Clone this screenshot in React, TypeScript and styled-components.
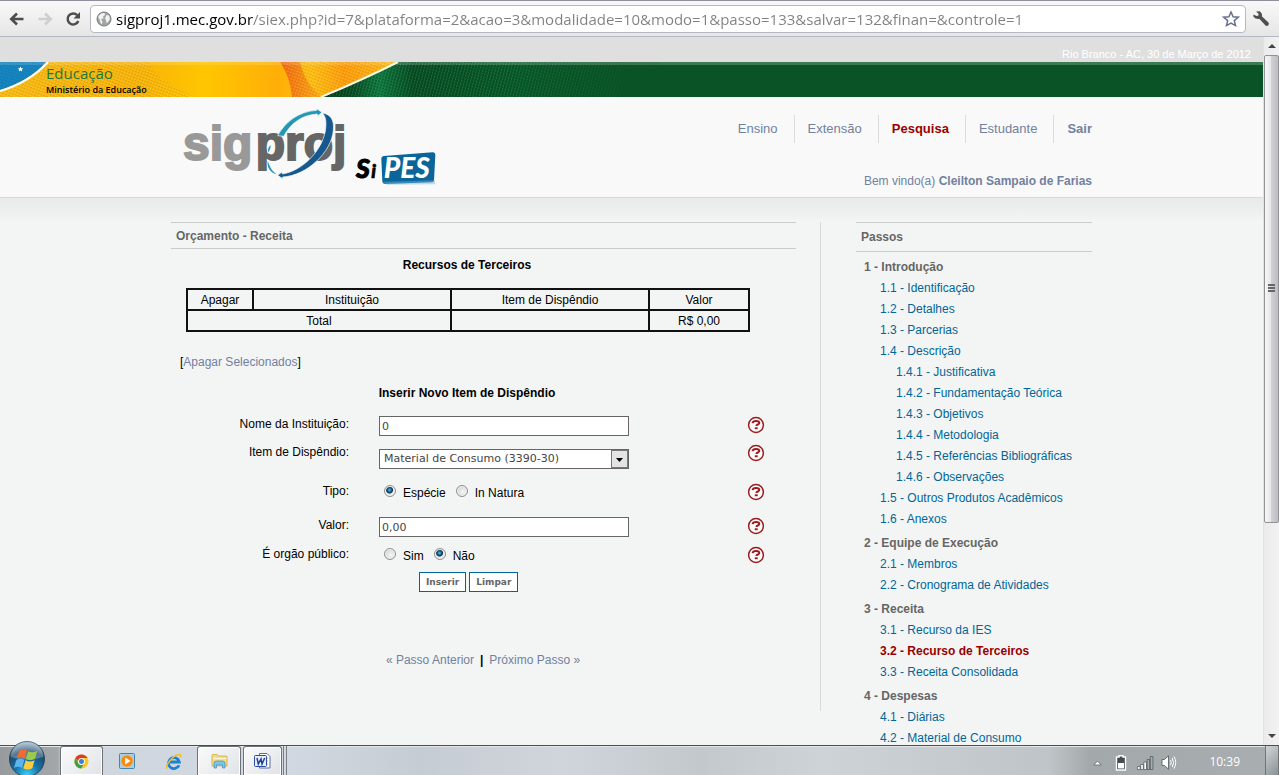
import React from "react";
import styled, { createGlobalStyle, css } from "styled-components";

const sans = `"Liberation Sans", Arial, sans-serif`;
const verdana = `"DejaVu Sans", Verdana, sans-serif`;
const segoe = `"Open Sans", "Segoe UI", sans-serif`;

const GlobalStyle = createGlobalStyle`
  * { box-sizing: border-box; }
  body { margin: 0; font: 12px/16px ${sans}; color: #000; background: #f3f5f4; }
  a { text-decoration: none; }
  button { font: inherit; }
  h1, h2, p, ul { margin: 0; padding: 0; }
  ul { list-style: none; }
`;

const Window = styled.div`
  display: flex;
  flex-direction: column;
  height: 100vh;
`;

/* Browser toolbar */
const Toolbar = styled.header`
  display: flex;
  align-items: center;
  flex: none;
  height: 37px;
  padding: 0 7px;
  border-top: 1px solid #8e8e9c;
  border-bottom: 1px solid #b3b8c4;
  background: linear-gradient(#f8f8f9, #e6e6e7);
`;

const ToolButton = styled.button<{ $width: number }>`
  display: flex;
  align-items: center;
  justify-content: center;
  width: ${(p) => p.$width}px;
  height: 28px;
  padding: 0;
  border: 0;
  background: none;
`;

const AddressBar = styled.div`
  display: flex;
  align-items: center;
  flex: 1;
  height: 28px;
  margin: 0 4px 0 7px;
  padding: 0 5px;
  border: 1px solid #b8b9c0;
  border-radius: 4px;
  background: #fff;
`;

const AddressInput = styled.input`
  flex: 1;
  min-width: 0;
  height: 24px;
  margin-left: 4px;
  padding: 0;
  border: 0;
  outline: 0;
  font: 15px/24px ${segoe};
  background: linear-gradient(90deg, #000 137px, #808080 137px);
  background-clip: text;
  -webkit-background-clip: text;
  -webkit-text-fill-color: transparent;
`;

/* Viewport */
const Viewport = styled.div`
  display: flex;
  flex: 1;
  min-height: 0;
`;

const Page = styled.div`
  flex: 1;
  min-width: 0;
  overflow: hidden;
`;

const DateBar = styled.div`
  height: 25px;
  padding: 10px 12px 0 0;
  background: #dfdfdf;
  color: #fff;
  font-size: 11px;
  line-height: 15px;
  text-align: right;
`;

const Banner = styled.div`
  position: relative;
  height: 35px;
  padding: 1px 0 0 46px;
  background: linear-gradient(#3c7a51 3px, #0a5326 3px);
`;

const BannerArt = styled.svg`
  position: absolute;
  top: 0;
  left: 0;
`;

const BannerTitle = styled.div`
  position: relative;
  color: #1c7a3c;
  font: 15px/21px ${segoe};
`;

const BannerSubtitle = styled.div`
  position: relative;
  font: 9px/12px ${segoe};
  font-weight: 600;
`;

const Container = styled.div`
  display: flex;
  justify-content: space-between;
  width: 100%;
  max-width: 921px;
  margin: 0 auto;
`;

const SiteHeader = styled.div`
  height: 101px;
  border-bottom: 1px solid #dadcdb;
  background: #f9f9f9;
`;

const HeaderRight = styled.div`
  display: flex;
  flex-direction: column;
  align-items: flex-end;
  padding-top: 18px;
  color: #71819f;
`;

const Nav = styled.nav`
  display: flex;
  margin-bottom: 30px;
`;

const NavLink = styled.a<{ $active?: boolean; $bold?: boolean }>`
  padding: 0 16px 0 13px;
  border-right: 1px solid #dcdcdc;
  color: ${(p) => (p.$active ? "#990000" : "#71819f")};
  font-size: 13px;
  font-weight: ${(p) => (p.$active || p.$bold ? "bold" : "normal")};
  line-height: 28px;
  &:last-child {
    padding-right: 0;
    border-right: 0;
  }
`;

const Body = styled.div`
  padding-top: 24px;
  background: linear-gradient(#e8eae9, #f3f5f4 24px);
`;

const Main = styled.main`
  flex: 1;
  min-width: 0;
  max-width: 625px;
`;

const SectionTitle = styled.h1<{ $height: number }>`
  height: ${(p) => p.$height}px;
  padding: 0 5px;
  border: solid #c9cccb;
  border-width: 1px 0;
  color: #666;
  font-size: 12px;
  line-height: ${(p) => p.$height - 1}px;
`;

const Block = styled.div`
  width: 562px;
  max-width: 100%;
  margin-left: 15px;
`;

const Caption = styled.h2`
  font-size: 12px;
  line-height: 16px;
  text-align: center;
`;

const ResourceBlock = styled(Block)`
  padding-top: 8px;
`;

const Table = styled.table`
  width: 100%;
  margin: 15px 0 22px;
  border-collapse: collapse;
  table-layout: fixed;
  th, td {
    height: 21px;
    padding: 0;
    border: 2px solid #111;
    font-weight: normal;
    line-height: 16px;
    text-align: center;
  }
`;

const DeleteLine = styled.p`
  margin: 0 0 15px 9px;
`;

const SoftLink = styled.a`
  color: #71819f;
`;

const Form = styled.form`
  padding-top: 15px;
`;

const FormRow = styled.div<{ $height: number }>`
  display: grid;
  grid-template-columns: 178px 250px 1fr;
  column-gap: 30px;
  align-items: start;
  height: ${(p) => p.$height}px;
`;

const labelText = css`
  line-height: 16px;
  text-align: right;
`;
const FieldLabel = styled.label`${labelText}`;
const GroupLabel = styled.span`${labelText}`;

const TextInput = styled.input`
  width: 100%;
  height: 20px;
  padding: 1px 2px 0;
  border: 1px solid #666;
  background: #fff;
  color: #444;
  font: 11px/16px ${verdana};
`;

const SelectWrap = styled.div`
  position: relative;
  height: 20px;
  margin-top: 5px;
`;

const Select = styled.select`
  appearance: none;
  display: block;
  width: 100%;
  height: 20px;
  padding: 0 20px 0 4px;
  border: 1px solid #666;
  border-radius: 0;
  background: #fff;
  color: #444;
  font: 11px/16px ${verdana};
`;

const SelectArrow = styled.svg`
  position: absolute;
  top: 1px;
  right: 1px;
  pointer-events: none;
`;

const RadioRow = styled.div`
  display: flex;
  height: 18px;
  padding-left: 5px;
  gap: 10px;
`;

const RadioLabel = styled.label`
  display: flex;
  gap: 7px;
  line-height: 20px;
`;

const Radio = styled.input`
  appearance: none;
  width: 12px;
  height: 12px;
  margin: 2px 0 0;
  border: 1px solid #8e8f8f;
  border-radius: 50%;
  background: radial-gradient(circle at 60% 60%, #f6f6f6, #c4c8cc);
  box-shadow: inset 0 0 0 1px #f4f4f4;
  &:checked {
    background: radial-gradient(circle at 45% 40%, #5fc0e8 0, #1a5f88 2px, #0b2f47 3px, #e4e8ea 4px);
  }
`;

const HelpButton = styled.button`
  display: block;
  width: 18px;
  height: 18px;
  justify-self: end;
  margin-right: 31px;
  padding: 0;
  border: 0;
  background: none;
`;

const Actions = styled.div`
  display: flex;
  gap: 3px;
  padding-left: 248px;
`;

const ActionButton = styled.button`
  height: 20px;
  padding: 0 6px;
  border: 1px solid #006699;
  background: #fff;
  color: #666;
  font: bold 9px/18px ${verdana};
`;

const Pager = styled.p`
  display: flex;
  justify-content: center;
  gap: 6px;
  margin-top: 60px;
  padding-left: 32px;
`;

const Aside = styled.aside`
  display: flex;
  flex: none;
  gap: 35px;
`;

const Divider = styled.div`
  width: 1px;
  height: 489px;
  background: #d9dbda;
`;

const Steps = styled.div`
  width: 236px;
`;

const StepGroup = styled.ul`
  padding-left: 8px;
  margin-bottom: 3px;
`;

const StepItem = styled.li<{ $level: number }>`
  padding-left: ${(p) => p.$level * 16}px;
  color: #666;
  font-weight: ${(p) => (p.$level === 0 ? "bold" : "normal")};
  line-height: 21px;
  white-space: nowrap;
`;

const StepLink = styled.a<{ $active?: boolean }>`
  color: ${(p) => (p.$active ? "#990000" : "#006699")};
  font-weight: ${(p) => (p.$active ? "bold" : "normal")};
`;

const StepsList = styled.div`
  padding-top: 5px;
`;

/* Scroll bar */
const ScrollBar = styled.div`
  display: flex;
  flex: none;
  flex-direction: column;
  width: 16px;
  border-left: 1px solid #e2e2e2;
  background: linear-gradient(90deg, #ebebeb, #f2f2f2);
`;

const ScrollArrow = styled.button`
  display: flex;
  align-items: center;
  justify-content: center;
  flex: none;
  height: 18px;
  padding: 0;
  border: 0;
  background: none;
`;

const ScrollThumb = styled.div`
  display: flex;
  align-items: center;
  justify-content: center;
  flex: 469;
  border: 1px solid #929297;
  border-radius: 2px;
  background: linear-gradient(90deg, #f7f7f7, #e6e6e8 45%, #cfcfd4 50%, #bdbdc4);
`;

const ScrollRest = styled.div`
  flex: 206;
`;

/* Task bar */
const TaskBar = styled.footer`
  position: relative;
  display: flex;
  justify-content: space-between;
  flex: none;
  height: 30px;
  padding-left: 60px;
  border-top: 1px solid #4b4f52;
  background: linear-gradient(90deg, #979b9e 0, #a3a7aa 58px, #cfd5dd 62px, #d3d9e2 280px, #c6ccd3 420px, #d0d5db 560px, #c3c8cd 700px, #ced3d8 820px, #bfc4c8 1050px, #a3a8aa 1090px, #a8adaf 100%);
  box-shadow: inset 0 1px 0 #e4e7ea;
`;

const StartButton = styled.button`
  position: absolute;
  top: -6px;
  left: 8px;
  width: 38px;
  height: 35px;
  padding: 0;
  border: 0;
  background: none;
  overflow: hidden;
`;

const Tasks = styled.div`
  display: flex;
`;

const TaskGap = styled.div`
  width: 2px;
`;

const TaskButton = styled.button<{ $open?: boolean; $width: number }>`
  display: flex;
  align-items: center;
  justify-content: center;
  width: ${(p) => p.$width}px;
  height: 29px;
  padding: 0;
  border: 1px solid ${(p) => (p.$open ? "#6d7276" : "transparent")};
  border-bottom: 0;
  border-radius: 3px 3px 0 0;
  background: ${(p) => (p.$open ? "linear-gradient(135deg, #fafafa, #e0e3e7)" : "none")};
  box-shadow: ${(p) => (p.$open ? "inset 0 0 0 1px #fff" : "none")};
`;

const TaskEdge = styled.div`
  width: 4px;
  margin-left: 1px;
  border: solid #7a7f83;
  border-width: 0 1px;
`;

const Tray = styled.div`
  display: flex;
  align-items: center;
`;

const TrayButton = styled.button`
  display: flex;
  align-items: center;
  justify-content: center;
  width: 24px;
  height: 28px;
  padding: 4px 0 0;
  border: 0;
  background: none;
`;

const Clock = styled.time`
  margin: 3px 25px 0 28px;
  color: #fff;
  font: 12px/18px ${segoe};
`;

const ShowDesktop = styled.button`
  width: 14px;
  height: 29px;
  padding: 0;
  border: 1px solid #6f7679;
  border-width: 0 1px;
  background: linear-gradient(135deg, #d0d4d6, #8b9295);
`;

type Step = { level: number; text: string; active?: boolean };

const steps: Step[][] = [
  [
    { level: 0, text: "1 - Introdução" },
    { level: 1, text: "1.1 - Identificação" },
    { level: 1, text: "1.2 - Detalhes" },
    { level: 1, text: "1.3 - Parcerias" },
    { level: 1, text: "1.4 - Descrição" },
    { level: 2, text: "1.4.1 - Justificativa" },
    { level: 2, text: "1.4.2 - Fundamentação Teórica" },
    { level: 2, text: "1.4.3 - Objetivos" },
    { level: 2, text: "1.4.4 - Metodologia" },
    { level: 2, text: "1.4.5 - Referências Bibliográficas" },
    { level: 2, text: "1.4.6 - Observações" },
    { level: 1, text: "1.5 - Outros Produtos Acadêmicos" },
    { level: 1, text: "1.6 - Anexos" },
  ],
  [
    { level: 0, text: "2 - Equipe de Execução" },
    { level: 1, text: "2.1 - Membros" },
    { level: 1, text: "2.2 - Cronograma de Atividades" },
  ],
  [
    { level: 0, text: "3 - Receita" },
    { level: 1, text: "3.1 - Recurso da IES" },
    { level: 1, text: "3.2 - Recurso de Terceiros", active: true },
    { level: 1, text: "3.3 - Receita Consolidada" },
  ],
  [
    { level: 0, text: "4 - Despesas" },
    { level: 1, text: "4.1 - Diárias" },
    { level: 1, text: "4.2 - Material de Consumo" },
  ],
];

const Help = ({ about }: { about: string }) => (
  <HelpButton type="button" aria-label={`Ajuda: ${about}`}>
    <svg width="18" height="18" viewBox="0 0 18 18">
      <circle cx="9" cy="9" r="7.4" fill="#fbfbfb" stroke="#9b1c1f" strokeWidth="1.5" />
      <path d="M5.6 7.2C5.800 5.600 7 5.100 9 5.100c2.100 0 3.300.6 3.300 1.900 0 1.600-2.900 1.400-2.900 3" fill="none" stroke="#9b1c1f" strokeWidth="2" />
      <rect x="7.800" y="11.300" width="2.900" height="1.900" fill="#9b1c1f" />
    </svg>
  </HelpButton>
);

const Logo = () => (
  <svg width="270" height="95" viewBox="33 6 810 285" role="img" aria-label="sigproj SiPES">
    <g fontFamily="Liberation Sans, Arial, sans-serif" fontWeight="bold" fontSize="144" strokeWidth="6">
      <text x="69" y="194" fill="#999" stroke="#999">sig</text>
      <text x="287" y="194" fill="#666" stroke="#666">proj</text>
    </g>
    <path d="M353 122C375 82 415 49 470 46L470 41 486 52 472 64 472 57C425 60 392 85 371 124Z" fill="#2397b5" stroke="#f9f9f9" strokeWidth="2" />
    <path d="M324 172C323 162 326 155 332 150 332 160 329 168 324 172Z" fill="#2397b5" stroke="#f9f9f9" strokeWidth="4" paintOrder="stroke" />
    <path d="M324 200C330 215 335 228 350 237 336 236 320 222 323 198Z" fill="#2397b5" stroke="#f9f9f9" strokeWidth="4" paintOrder="stroke" />
    <path d="M487 54C514 58 523 78 520 105 515 172 440 242 368 246L368 251 353 241 366 231 367 237C425 228 485 170 496 108 500 82 498 65 487 54Z" fill="#15598f" stroke="#f9f9f9" strokeWidth="2" />
    <g fontFamily="Lato, sans-serif" fontWeight="900" fontStyle="italic">
      <text x="588" y="248" fontSize="80" fill="#000" stroke="#000" strokeWidth="3">S</text>
      <text x="634" y="248" fontSize="56" fill="#000" stroke="#000" strokeWidth="2">i</text>
      <path d="M672 183L818 172Q826 172 826 181L822 256Q822 262 815 262L676 267Q668 267 667 259L664 192Q664 184 672 183Z" fill="#0a659b" />
      <path d="M668 260L824 256 826 268 680 269Z" fill="#74b2d2" opacity=".45" />
      <text x="671" y="248" fontSize="84" fill="#fff">PES</text>
    </g>
  </svg>
);

const BannerPicture = () => (
  <BannerArt width="660" height="35" viewBox="0 0 660 35" aria-hidden="true">
    <defs>
      <linearGradient id="gold">
        <stop offset="0" stopColor="#f8ba14" />
        <stop offset=".35" stopColor="#f9b408" />
        <stop offset=".5" stopColor="#ffc600" />
        <stop offset=".68" stopColor="#ffae08" />
        <stop offset=".76" stopColor="#ffc012" />
        <stop offset=".84" stopColor="#ff9d0a" />
        <stop offset="1" stopColor="#fdc418" />
      </linearGradient>
      <linearGradient id="fold">
        <stop offset="0" stopColor="#f4670f" />
        <stop offset="1" stopColor="#fbb014" />
      </linearGradient>
      <linearGradient id="green">
        <stop offset="0" stopColor="#063a1b" />
        <stop offset=".09" stopColor="#0b4a24" />
        <stop offset=".17" stopColor="#137a42" />
        <stop offset=".27" stopColor="#0a4a24" />
        <stop offset=".6" stopColor="#0a5a2a" />
        <stop offset="1" stopColor="#0a5326" />
      </linearGradient>
      <linearGradient id="fade">
        <stop offset="0" stopColor="#0a5326" stopOpacity="0" />
        <stop offset="1" stopColor="#0a5326" />
      </linearGradient>
      <pattern id="weave" width="3" height="3" patternUnits="userSpaceOnUse" patternTransform="rotate(20)">
        <rect width="1" height="1" fill="#fff" opacity=".22" />
        <rect x="1" y="1" width="2" height="1" fill="#000" opacity=".1" />
      </pattern>
      <pattern id="darkWeave" width="3" height="3" patternUnits="userSpaceOnUse" patternTransform="rotate(15)">
        <rect width="1" height="2" fill="#26a35a" opacity=".45" />
        <rect x="1" y="1" width="2" height="1" fill="#002a10" opacity=".4" />
      </pattern>
    </defs>
    <path d="M0 0H410L322 35H0Z" fill="url(#gold)" />
    <path d="M280 0H300Q305 22 322 35H292Q290 14 280 0Z" fill="url(#fold)" />
    <path d="M0 31Q35 20 50 0H150Q150 15 195 35H0Z" fill="url(#weave)" />
    <path d="M280 0H398L322 35H292Q292 15 280 0Z" fill="url(#weave)" />
    <path d="M0 0H46Q28 20 0 28Z" fill="#1584c6" />
    <path d="M0 0H46Q28 20 0 28Z" fill="url(#darkWeave)" opacity=".35" />
    <path d="M0 29Q30 20 48 0" fill="none" stroke="#fff" strokeWidth="2" />
    <path d="M20.500 4.500l.8 1.700 1.900.2-1.400 1.300.4 1.900-1.700-1-1.700 1 .4-1.900-1.400-1.300 1.900-.2z" fill="#fff" />
    <path d="M398 0H660V35H322Z" fill="url(#green)" />
    <path d="M398 0H620V35H322Z" fill="url(#darkWeave)" />
    <rect x="500" width="160" height="35" fill="url(#fade)" />
    <path d="M321 35Q362 18 398 0" fill="none" stroke="#fffbe8" strokeWidth="2" />
    <rect x="398" width="262" height="3" fill="#fff" opacity=".2" />
    <rect width="398" height="3" fill="#fff" opacity=".15" />
  </BannerArt>
);

const WindowsOrb = () => (
  <svg width="38" height="38" viewBox="0 0 38 38">
    <defs>
      <radialGradient id="orb" cx=".5" cy=".95" r=".9">
        <stop offset="0" stopColor="#3bd0f5" />
        <stop offset=".4" stopColor="#1573ac" />
        <stop offset=".75" stopColor="#214a6e" />
        <stop offset="1" stopColor="#8fb0c4" />
      </radialGradient>
    </defs>
    <circle cx="19" cy="19" r="17.500" fill="url(#orb)" stroke="#31485a" />
    <path d="M3 17A16 16 0 0 1 35 17Q19 22 3 17Z" fill="#fff" opacity=".25" />
    <path d="M11 11q4-3 8-.5l-2.300 8q-4-2.500-8 0z" fill="#ef6a35" />
    <path d="M20.200 11.300q4 2.200 9-.3l-2.300 8q-5 2.300-9 0z" fill="#9bcb4a" />
    <path d="M8.300 20q4-2.500 8 0l-2.300 8q-4-2.500-8 0z" fill="#5db5ee" />
    <path d="M17.600 20.300q4 2.400 9 0l-2.300 8q-5 2.500-9 0z" fill="#fccc3f" />
  </svg>
);

const ChromeIcon = () => (
  <svg width="15" height="15" viewBox="0 0 16 16">
    <circle cx="8" cy="8" r="7.500" fill="#f6c72b" />
    <path d="M1.500 4.250A7.500 7.500 0 0 1 14.500 4.250H8Q5 4.500 4.600 8Z" fill="#dd3b2c" />
    <path d="M1.500 4.250A7.500 7.500 0 0 0 7.600 15.500L11 9.800 8 11.500 4.800 10Z" fill="#3ba04b" />
    <circle cx="8" cy="8" r="3.600" fill="#fff" />
    <circle cx="8" cy="8" r="2.700" fill="#3b7fd9" />
  </svg>
);

const PlayerIcon = () => (
  <svg width="16" height="16" viewBox="0 0 16 16">
    <rect x=".5" y=".5" width="15" height="15" rx="1" fill="#9fd0ee" stroke="#3f86b8" />
    <circle cx="8" cy="8" r="6" fill="#f58a12" stroke="#fbc279" strokeWidth=".6" />
    <path d="M6.200 4.600L11.500 8l-5.300 3.400z" fill="#fff" />
  </svg>
);

const ExplorerIcon = () => (
  <svg width="17" height="17" viewBox="0 0 17 17">
    <path d="M14 12.200A5.500 5.500 0 1 1 14.300 9H5" fill="none" stroke="#1b83d4" strokeWidth="2.800" />
    <path d="M2.200 15.500C-.5 12.500 9 1 15 1.500 16 2 15.600 3.500 15 4.500" fill="none" stroke="#f3bd2c" strokeWidth="1.500" />
  </svg>
);

const FolderIcon = () => (
  <svg width="17" height="16" viewBox="0 0 17 16">
    <path d="M1 2.500Q1 1.500 2 1.500h4l1 1.500h8q1 0 1 1V13H1z" fill="#f4dc84" stroke="#c9a84a" strokeWidth=".8" />
    <path d="M2 5.500h13.500" stroke="#fff7cf" strokeWidth="1.200" />
    <path d="M3 15V10.500Q3 8 5.500 8h6Q14 8 14 10.500V15h-2.500v-3h-6v3z" fill="#7fc4e8" stroke="#3b8fc0" strokeWidth=".7" />
  </svg>
);

const WordIcon = () => (
  <svg width="17" height="16" viewBox="0 0 17 16">
    <path d="M5.500.5H13L16 3.500V15H5.500z" fill="#fff" stroke="#5b6fa8" />
    <path d="M8 5h6M8 8h6M8 11h6" stroke="#9db0dc" />
    <rect x=".5" y="2.500" width="12" height="11" rx="1" fill="#e8effb" stroke="#2b4d9c" />
    <path d="M3 5l1.300 6L7 6l1 5 2.700-6" fill="none" stroke="#1f4397" strokeWidth="1.500" />
  </svg>
);

export default function App() {
  return (
    <Window>
      <GlobalStyle />
      <Toolbar>
        <ToolButton aria-label="Voltar" $width={20}>
          <svg width="16" height="14" viewBox="0 0 16 14" fill="none" stroke="#4d4d4d" strokeWidth="2.600">
            <path d="M2 7h12.500M8 1.500L2.300 7 8 12.500" />
          </svg>
        </ToolButton>
        <ToolButton aria-label="Avançar" $width={36}>
          <svg width="16" height="14" viewBox="0 0 16 14" fill="none" stroke="#cfcfd1" strokeWidth="2.600">
            <path d="M14 7H1.500M8 1.500L13.700 7 8 12.500" />
          </svg>
        </ToolButton>
        <ToolButton aria-label="Recarregar" $width={20}>
          <svg width="16" height="16" viewBox="0 0 16 16">
            <path d="M12.200 4.200A5.500 5.500 0 1 0 13.300 10" fill="none" stroke="#4d4d4d" strokeWidth="2.500" />
            <path d="M15 1v6.500H8.500z" fill="#4d4d4d" />
          </svg>
        </ToolButton>
        <AddressBar>
          <svg width="16" height="16" viewBox="0 0 16 16" aria-hidden="true">
            <circle cx="8" cy="8" r="7" fill="#a2a4a6" stroke="#77797b" />
            <path d="M2.500 5Q5 1.500 8.500 2L9 4 7 5.500 7.500 7.500 5 8 6.500 11 5.500 13.500Q3.500 11 4 9Q2 7.500 2.500 5ZM10.500 4L13 4.500 14 8 12 11 10.500 12 10 9 9 7.500Z" fill="#f2f2f2" />
          </svg>
          <AddressInput
            aria-label="Endereço"
            spellCheck={false}
            defaultValue="sigproj1.mec.gov.br/siex.php?id=7&plataforma=2&acao=3&modalidade=10&modo=1&passo=133&salvar=132&finan=&controle=1"
          />
          <svg width="18" height="18" viewBox="0 0 18 18" role="img" aria-label="Favorito">
            <path d="M9 2l2.100 4.700 5.100.5-3.900 3.400 1.200 5L9 13l-4.500 2.600 1.200-5-3.900-3.400 5.100-.5z" fill="#fff" stroke="#66718a" strokeWidth="1.500" />
          </svg>
        </AddressBar>
        <ToolButton aria-label="Ferramentas" $width={22}>
          <svg width="18" height="18" viewBox="0 0 18 18">
            <path d="M4 1.500L7.500 1.200Q10.500 3 10 6.500L16.500 12.500Q17.500 14 16.300 15.300 15 16.500 13.500 15.500L7.500 9Q3.500 9.500 1.300 6.500L1.500 4.500 4.500 6 6.500 5.500 6.500 3.800Z" fill="#4f4f4f" />
          </svg>
        </ToolButton>
      </Toolbar>

      <Viewport>
        <Page>
          <DateBar>Rio Branco - AC, 30 de Março de 2012</DateBar>
          <Banner>
            <BannerPicture />
            <BannerTitle>Educação</BannerTitle>
            <BannerSubtitle>Ministério da Educação</BannerSubtitle>
          </Banner>
          <SiteHeader>
            <Container>
              <Logo />
              <HeaderRight>
                <Nav>
                  <NavLink href="#">Ensino</NavLink>
                  <NavLink href="#">Extensão</NavLink>
                  <NavLink href="#" $active>Pesquisa</NavLink>
                  <NavLink href="#">Estudante</NavLink>
                  <NavLink href="#" $bold>Sair</NavLink>
                </Nav>
                <p>Bem vindo(a) <b>Cleilton Sampaio de Farias</b></p>
              </HeaderRight>
            </Container>
          </SiteHeader>

          <Body>
            <Container>
              <Main>
                <SectionTitle $height={27}>Orçamento - Receita</SectionTitle>
                <ResourceBlock>
                  <Caption>Recursos de Terceiros</Caption>
                  <Table>
                    <colgroup>
                      <col width="66" />
                      <col width="198" />
                      <col width="198" />
                      <col width="100" />
                    </colgroup>
                    <thead>
                      <tr>
                        <th>Apagar</th>
                        <th>Instituição</th>
                        <th>Item de Dispêndio</th>
                        <th>Valor</th>
                      </tr>
                    </thead>
                    <tbody>
                      <tr>
                        <td colSpan={2}>Total</td>
                        <td />
                        <td>R$ 0,00</td>
                      </tr>
                    </tbody>
                  </Table>
                </ResourceBlock>
                <DeleteLine>
                  [<SoftLink href="#">Apagar Selecionados</SoftLink>]
                </DeleteLine>
                <Block>
                  <Caption>Inserir Novo Item de Dispêndio</Caption>
                </Block>
                <Form onSubmit={(e) => e.preventDefault()}>
                  <FormRow $height={28}>
                    <FieldLabel htmlFor="instituicao">Nome da Instituição:</FieldLabel>
                    <TextInput id="instituicao" defaultValue="0" />
                    <Help about="Nome da Instituição" />
                  </FormRow>
                  <FormRow $height={39}>
                    <FieldLabel htmlFor="item">Item de Dispêndio:</FieldLabel>
                    <SelectWrap>
                      <Select id="item">
                        <option>Material de Consumo (3390-30)</option>
                      </Select>
                      <SelectArrow width="17" height="18" viewBox="0 0 17 18">
                        <rect x=".5" y=".5" width="16" height="17" fill="#e4e4e4" stroke="#777" />
                        <path d="M5 8h7l-3.500 4z" fill="#000" />
                      </SelectArrow>
                    </SelectWrap>
                    <Help about="Item de Dispêndio" />
                  </FormRow>
                  <FormRow $height={34} role="radiogroup" aria-labelledby="tipo">
                    <GroupLabel id="tipo">Tipo:</GroupLabel>
                    <RadioRow>
                      <RadioLabel><Radio type="radio" name="tipo" defaultChecked />Espécie</RadioLabel>
                      <RadioLabel><Radio type="radio" name="tipo" />In Natura</RadioLabel>
                    </RadioRow>
                    <Help about="Tipo" />
                  </FormRow>
                  <FormRow $height={29}>
                    <FieldLabel htmlFor="valor">Valor:</FieldLabel>
                    <TextInput id="valor" defaultValue="0,00" />
                    <Help about="Valor" />
                  </FormRow>
                  <FormRow $height={26} role="radiogroup" aria-labelledby="publico">
                    <GroupLabel id="publico">É orgão público:</GroupLabel>
                    <RadioRow>
                      <RadioLabel><Radio type="radio" name="publico" />Sim</RadioLabel>
                      <RadioLabel><Radio type="radio" name="publico" defaultChecked />Não</RadioLabel>
                    </RadioRow>
                    <Help about="É orgão público" />
                  </FormRow>
                  <Actions>
                    <ActionButton type="submit">Inserir</ActionButton>
                    <ActionButton type="reset">Limpar</ActionButton>
                  </Actions>
                </Form>
                <Block>
                  <Pager>
                    <SoftLink href="#">« Passo Anterior</SoftLink>
                    <b>|</b>
                    <SoftLink href="#">Próximo Passo »</SoftLink>
                  </Pager>
                </Block>
              </Main>
              <Aside>
                <Divider />
                <Steps>
                  <SectionTitle as="h2" $height={30}>Passos</SectionTitle>
                  <StepsList>
                    {steps.map((group) => (
                      <StepGroup key={group[0].text}>
                        {group.map((s) => (
                          <StepItem key={s.text} $level={s.level}>
                            {s.level === 0 ? s.text : <StepLink href="#" $active={s.active}>{s.text}</StepLink>}
                          </StepItem>
                        ))}
                      </StepGroup>
                    ))}
                  </StepsList>
                </Steps>
              </Aside>
            </Container>
          </Body>
        </Page>
        <ScrollBar>
          <ScrollArrow aria-label="Rolar para cima">
            <svg width="8" height="4" viewBox="0 0 8 4"><path d="M0 4L4 0l4 4z" fill="#444" /></svg>
          </ScrollArrow>
          <ScrollThumb>
            <svg width="7" height="9" viewBox="0 0 7 9"><path d="M0 1h7M0 4h7M0 7h7" stroke="#666" strokeWidth="2" /></svg>
          </ScrollThumb>
          <ScrollRest />
          <ScrollArrow aria-label="Rolar para baixo">
            <svg width="8" height="4" viewBox="0 0 8 4"><path d="M0 0h8L4 4z" fill="#444" /></svg>
          </ScrollArrow>
        </ScrollBar>
      </Viewport>

      <TaskBar>
        <StartButton aria-label="Iniciar"><WindowsOrb /></StartButton>
        <Tasks>
          <TaskButton $width={43} $open aria-label="Chrome"><ChromeIcon /></TaskButton>
          <TaskButton $width={47} aria-label="Media Player"><PlayerIcon /></TaskButton>
          <TaskButton $width={47} aria-label="Internet Explorer"><ExplorerIcon /></TaskButton>
          <TaskButton $width={44} $open aria-label="Pastas"><FolderIcon /></TaskButton>
          <TaskGap />
          <TaskButton $width={39} $open aria-label="Word"><WordIcon /></TaskButton>
          <TaskEdge />
        </Tasks>
        <Tray>
          <TrayButton aria-label="Mostrar ícones ocultos">
            <svg width="9" height="6" viewBox="0 0 9 6"><path d="M.8 5L4.500 1l3.700 4z" fill="#fff" stroke="#5d6568" strokeWidth=".8" /></svg>
          </TrayButton>
          <TrayButton aria-label="Bateria">
            <svg width="12" height="16" viewBox="0 0 12 16">
              <path d="M4 2V.8h4V2h2.500v13h-9V2z" fill="#444b4f" stroke="#fff" strokeWidth="1.400" />
              <rect x="3" y="8" width="6" height="5.500" fill="#fff" />
            </svg>
          </TrayButton>
          <TrayButton aria-label="Rede">
            <svg width="17" height="14" viewBox="0 0 17 14">
              <g stroke="#4c5357" strokeWidth=".7" fill="#fff">
                <path d="M.5 10.500h2.600v3H.5zM3.700 8.500h2.600v5H3.700zM6.900 6h2.600v7.500H6.900z" />
                <path d="M10.100 3.500h2.600v10h-2.600zM13.300.5h2.600v13h-2.600z" fill="#a8adaf" />
              </g>
            </svg>
          </TrayButton>
          <TrayButton aria-label="Volume">
            <svg width="16" height="15" viewBox="0 0 16 15">
              <path d="M1 4.500h2.500L7.500.8v13.400L3.500 10.500H1z" fill="#fff" stroke="#4c5357" strokeWidth=".8" />
              <path d="M9.500 5q1.500 2.500 0 5M11.300 3q2.500 4.500 0 9M13 1.500q3.500 6 0 12" fill="none" stroke="#fff" />
            </svg>
          </TrayButton>
          <Clock>10:39</Clock>
          <ShowDesktop aria-label="Mostrar área de trabalho" />
        </Tray>
      </TaskBar>
    </Window>
  );
}
